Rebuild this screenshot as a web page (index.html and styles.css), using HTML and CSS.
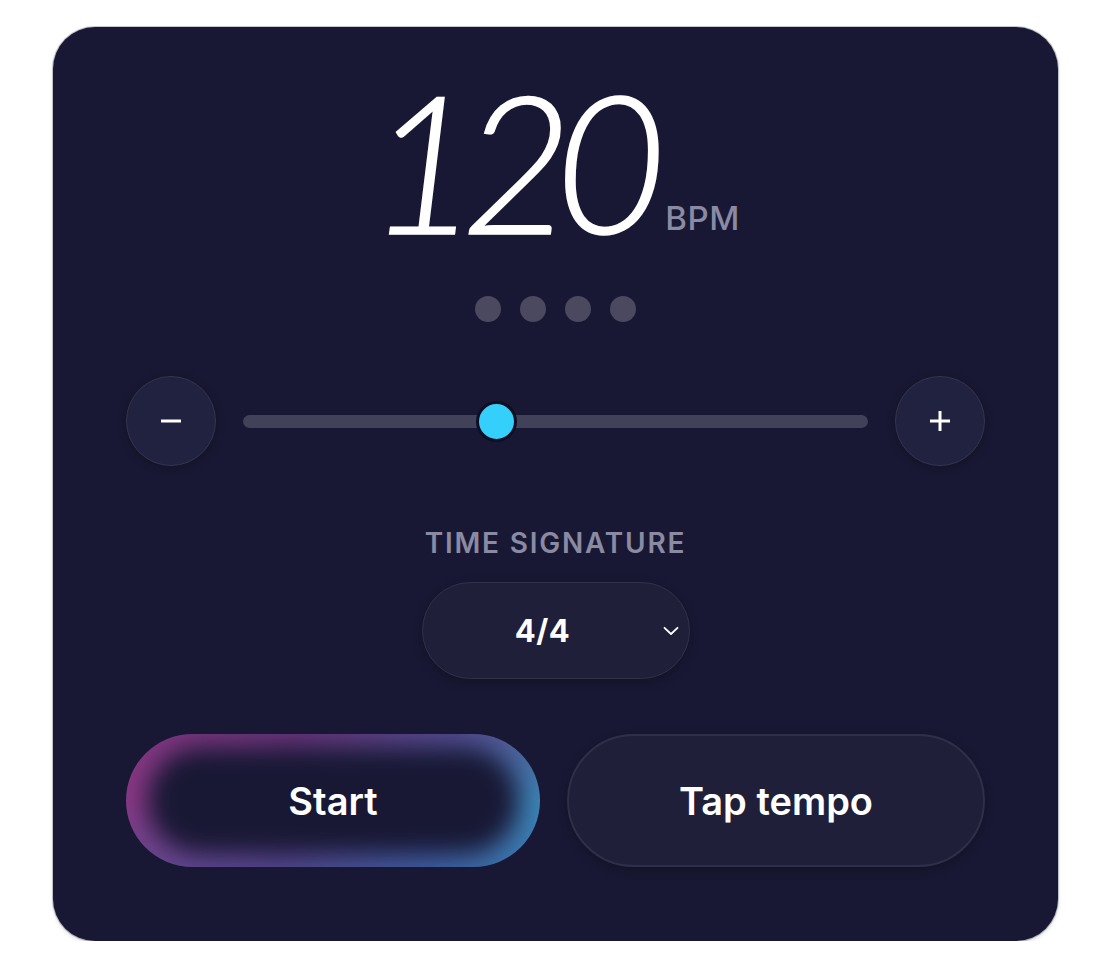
FILE: index.html
```html
<!DOCTYPE html>
<html lang="en">
<head>
<meta charset="utf-8">
<title>Metronome</title>
<link rel="stylesheet" href="styles.css">
</head>
<body>
<main class="card">
  <div class="tempo">
    <span class="tempo-value">120</span>
    <span class="tempo-unit">BPM</span>
  </div>
  <div class="beats">
    <span class="dot"></span>
    <span class="dot"></span>
    <span class="dot"></span>
    <span class="dot"></span>
  </div>
  <div class="slider-row">
    <button class="round-btn" aria-label="Decrease tempo">
      <svg width="20" height="4" viewBox="0 0 20 4"><rect x="0" y="0.5" width="20" height="3" fill="#fff"/></svg>
    </button>
    <div class="track">
      <div class="thumb" style="left: 40.6%"></div>
    </div>
    <button class="round-btn" aria-label="Increase tempo">
      <svg width="20" height="20" viewBox="0 0 20 20"><rect x="0" y="8.5" width="20" height="3" fill="#fff"/><rect x="8.5" y="0" width="3" height="20" fill="#fff"/></svg>
    </button>
  </div>
  <div class="sig-label">TIME SIGNATURE</div>
  <div class="select">
    <span class="select-value">4/4</span>
    <svg class="chevron" width="16" height="10" viewBox="0 0 16 10"><path d="M1.5 1.8 L8 8 L14.5 1.8" fill="none" stroke="#fff" stroke-width="1.8" stroke-linecap="round" stroke-linejoin="round"/></svg>
  </div>
  <div class="actions">
    <button class="btn start"><span class="btn-label">Start</span></button>
    <button class="btn tap"><span class="btn-label">Tap tempo</span></button>
  </div>
</main>
</body>
</html>
```
FILE: styles.css
```css
* { box-sizing: border-box; }
html, body { margin: 0; padding: 0; background: #ffffff; }
body {
  font-family: Inter, "Noto Sans", "Liberation Sans", sans-serif;
  padding-top: 27px;
  padding-left: 53px;
}
.card {
  width: 1005px;
  background: #181834;
  border-radius: 42px;
  box-shadow: 0 0 0 1px rgba(40,40,70,0.25), 0 2px 4px rgba(0,0,0,0.15);
  padding: 37px 73px 74px;
  display: flex;
  flex-direction: column;
  align-items: center;
  color: #fff;
}
.card > * { flex-shrink: 0; }
.tempo {
  display: flex;
  align-items: baseline;
  gap: 17px;
  margin-left: -3px;
}
.tempo-value {
  font-family: Lato, "Open Sans", sans-serif;
  font-style: italic;
  font-weight: 300;
  font-size: 192px;
  line-height: 1;
  color: #fff;
  letter-spacing: -18px;
  -webkit-text-stroke: 1.5px #fff;
}
.tempo-unit {
  font-size: 33px;
  font-weight: 500;
  color: #8b8aa3;
  letter-spacing: 0.5px;
  position: relative;
  top: -4px;
}
.beats {
  display: flex;
  gap: 19px;
  margin-top: 40px;
}
.dot {
  width: 26px;
  height: 26px;
  border-radius: 50%;
  background: #4a4960;
}
.slider-row {
  align-self: stretch;
  display: flex;
  align-items: center;
  gap: 27px;
  margin-top: 54px;
}
.round-btn {
  width: 90px;
  height: 90px;
  flex: none;
  border-radius: 50%;
  background: #212140;
  border: 1.5px solid #35354f;
  display: flex;
  align-items: center;
  justify-content: center;
  padding: 0;
  box-shadow: 0 2px 8px rgba(0,0,0,0.25);
}
.track {
  flex: 1;
  height: 13px;
  border-radius: 7px;
  background: #42415a;
  position: relative;
}
.thumb {
  position: absolute;
  top: 50%;
  width: 41px;
  height: 41px;
  margin-left: -20.5px;
  margin-top: -20.5px;
  border-radius: 50%;
  background: #34d0fb;
  border: 3px solid #0e0e24;
}
.sig-label {
  margin-top: 60px;
  font-size: 28px;
  font-weight: 600;
  color: #8b8aa3;
  letter-spacing: 1.8px;
}
.select {
  margin-top: 22px;
  width: 268px;
  height: 97px;
  border-radius: 49px;
  background: #1f1f3a;
  border: 1.5px solid #31314c;
  box-shadow: 0 3px 10px rgba(0,0,0,0.25);
  display: flex;
  align-items: center;
  justify-content: center;
  position: relative;
  padding-right: 26px;
}
.select-value {
  font-size: 31px;
  font-weight: 700;
  color: #fff;
  letter-spacing: 0.5px;
}
.chevron {
  position: absolute;
  right: 10px;
  top: 43px;
}
.actions {
  align-self: stretch;
  display: flex;
  gap: 27px;
  margin-top: 55px;
}
.btn {
  flex: 1;
  height: 133px;
  border-radius: 67px;
  font-family: Inter, "Noto Sans", sans-serif;
  font-size: 38px;
  font-weight: 600;
  color: #fff;
  padding: 0;
  position: relative;
  overflow: hidden;
}
.btn-label { position: relative; }
.start {
  border: none;
  background:
    linear-gradient(180deg, rgba(120,50,120,0.35) 0%, rgba(0,0,0,0) 50%, rgba(60,100,170,0.35) 100%),
    linear-gradient(100deg, #8a3884 0%, #5c3479 40%, #3e5898 75%, #3a88b6 100%);
}
.start::before {
  content: "";
  position: absolute;
  inset: 14px 22px;
  border-radius: 60px;
  background: #181834;
  filter: blur(12px);
}
.tap {
  background: #1f1f3a;
  border: 2px solid #2f2f4a;
  box-shadow: 0 3px 10px rgba(0,0,0,0.25);
}
```
